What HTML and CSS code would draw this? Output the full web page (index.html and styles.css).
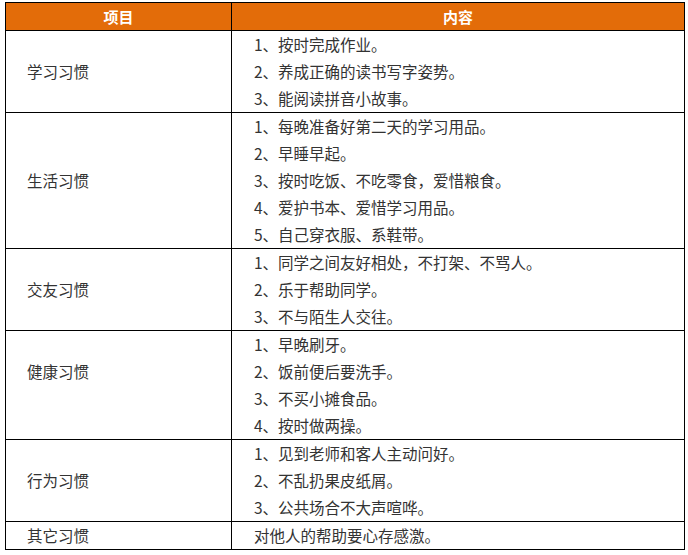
FILE: index.html
```html
<!DOCTYPE html>
<html lang="zh">
<head>
<meta charset="utf-8">
<link rel="stylesheet" href="styles.css">
</head>
<body>
<table class="habits">
  <thead>
    <tr><th class="col-item">项目</th><th class="col-content">内容</th></tr>
  </thead>
  <tbody>
    <tr>
      <td class="item">学习习惯</td>
      <td class="content"><p>1、按时完成作业。</p><p>2、养成正确的读书写字姿势。</p><p>3、能阅读拼音小故事。</p></td>
    </tr>
    <tr>
      <td class="item">生活习惯</td>
      <td class="content"><p>1、每晚准备好第二天的学习用品。</p><p>2、早睡早起。</p><p>3、按时吃饭、不吃零食，爱惜粮食。</p><p>4、爱护书本、爱惜学习用品。</p><p>5、自己穿衣服、系鞋带。</p></td>
    </tr>
    <tr>
      <td class="item">交友习惯</td>
      <td class="content"><p>1、同学之间友好相处，不打架、不骂人。</p><p>2、乐于帮助同学。</p><p>3、不与陌生人交往。</p></td>
    </tr>
    <tr>
      <td class="item item-raised">健康习惯</td>
      <td class="content"><p>1、早晚刷牙。</p><p>2、饭前便后要洗手。</p><p>3、不买小摊食品。</p><p>4、按时做两操。</p></td>
    </tr>
    <tr>
      <td class="item">行为习惯</td>
      <td class="content"><p>1、见到老师和客人主动问好。</p><p>2、不乱扔果皮纸屑。</p><p>3、公共场合不大声喧哗。</p></td>
    </tr>
    <tr>
      <td class="item">其它习惯</td>
      <td class="content"><p>对他人的帮助要心存感激。</p></td>
    </tr>
  </tbody>
</table>
</body>
</html>
```
FILE: styles.css
```css
html, body {
  margin: 0;
  padding: 0;
  background: #ffffff;
}
body {
  padding: 2px 0 0 5px;
  font-family: "Microsoft YaHei", "Noto Sans CJK SC", "Noto Sans", sans-serif;
  font-size: 15.5px;
  color: #333333;
}
.habits {
  border-collapse: collapse;
  width: 677px;
  table-layout: fixed;
}
.habits th,
.habits td {
  border: 1px solid #000;
  padding: 0;
}
.habits th {
  background: #e36c09;
  color: #fff;
  font-weight: bold;
  font-size: 15px;
  height: 27px;
  line-height: 27px;
  text-align: center;
}
.col-item { width: 225px; }
.col-content { width: 452px; }
.habits .item {
  padding-left: 21px;
  vertical-align: middle;
  line-height: 27px;
}
.habits .item-raised {
  padding-bottom: 27px;
}
.habits .content {
  padding-left: 22px;
  vertical-align: top;
}
.content p {
  margin: 0;
  height: 27px;
  line-height: 27px;
  white-space: nowrap;
}
```
